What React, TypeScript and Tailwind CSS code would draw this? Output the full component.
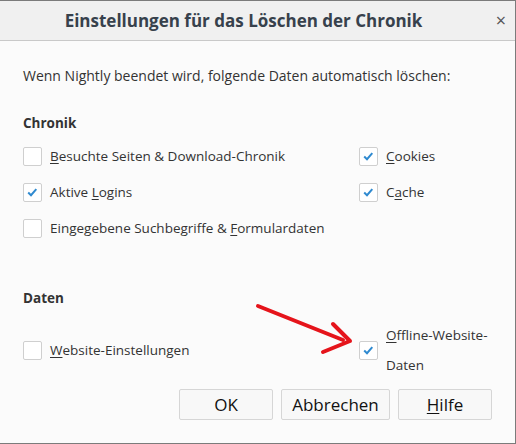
import React from 'react';

const font = { fontFamily: '"Open Sans", "Noto Sans", sans-serif' };

type Item = { label: React.ReactNode; checked: boolean };

function Check({ checked }: { checked: boolean }) {
  return (
    <span className="flex h-[19px] w-[19px] shrink-0 items-center justify-center rounded-[2px] border border-[#cfcfcf] bg-white">
      {checked && (
        <svg width="11" height="9" viewBox="0 0 11 9">
          <path d="M1.2 4.5 L4 7.2 L9.3 1.2" fill="none" stroke="#2f8ad0" strokeWidth="2" />
        </svg>
      )}
    </span>
  );
}

function Row({ label, checked }: Item) {
  return (
    <div className="flex h-[36px] items-center gap-[8px]">
      <Check checked={checked} />
      <span className="text-[13.5px] text-[#333]">{label}</span>
    </div>
  );
}

const u = (s: string) => <span className="underline underline-offset-2">{s}</span>;

export default function App() {
  return (
    <div className="relative flex h-[444px] w-[516px] flex-col border-y border-r border-[#7b7b7b] bg-[#fbfbfb]" style={font}>
      <div className="flex h-[40px] shrink-0 items-center border-b border-[#c9c9c9] bg-[#f0f0f0]">
        <div className="flex-1 text-center text-[17px] font-bold text-[#37414c]">Einstellungen für das Löschen der Chronik</div>
        <div className="w-[28px] text-center text-[18px] text-[#555]">×</div>
      </div>

      <div className="flex flex-col px-[23px]">
        <p className="mt-[25px] text-[14px] leading-[20px] text-[#333]">
          Wenn Nightly beendet wird, folgende Daten automatisch löschen:
        </p>
        <h2 className="mt-[27px] text-[13.5px] font-bold leading-[20px] text-[#333]">Chronik</h2>
        <div className="mt-[5px] grid grid-cols-[336px_1fr]">
          <div>
            <Row checked={false} label={<>{u('B')}esuchte Seiten &amp; Download-Chronik</>} />
            <Row checked label={<>Aktive {u('L')}ogins</>} />
            <Row checked={false} label={<>Eingegebene Suchbegriffe &amp; {u('F')}ormulardaten</>} />
          </div>
          <div>
            <Row checked label={<>{u('C')}ookies</>} />
            <Row checked label={<>C{u('a')}che</>} />
          </div>
        </div>
        <h2 className="mt-[42px] text-[13.5px] font-bold leading-[20px] text-[#333]">Daten</h2>
        <div className="mt-[12px] grid h-[60px] grid-cols-[336px_1fr] items-center">
          <Row checked={false} label={<>{u('W')}ebsite-Einstellungen</>} />
          <div className="flex items-center gap-[8px]">
            <Check checked />
            <span className="w-[104px] text-[13.5px] leading-[30px] text-[#333]">{u('O')}ffline-Website-Daten</span>
          </div>
        </div>
        <div className="mt-[9px] flex justify-end gap-[8px] text-[17px] text-[#111]">
          <button className="h-[31px] w-[94px] rounded-[2px] border border-[#d6d6d6] bg-[#f8f8f8]">OK</button>
          <button className="h-[31px] w-[109px] rounded-[2px] border border-[#d6d6d6] bg-[#f8f8f8]">Abbrechen</button>
          <button className="h-[31px] w-[94px] rounded-[2px] border border-[#d6d6d6] bg-[#f8f8f8]">{u('H')}ilfe</button>
        </div>
      </div>

      <svg className="pointer-events-none absolute left-0 top-0" width="516" height="444">
        <path d="M258 305 L343 339" stroke="#e5141b" strokeWidth="4" strokeLinecap="round" fill="none" />
        <path d="M333 323 L350 340 L323 351" stroke="#e5141b" strokeWidth="4" strokeLinecap="round" strokeLinejoin="round" fill="none" />
      </svg>
    </div>
  );
}
